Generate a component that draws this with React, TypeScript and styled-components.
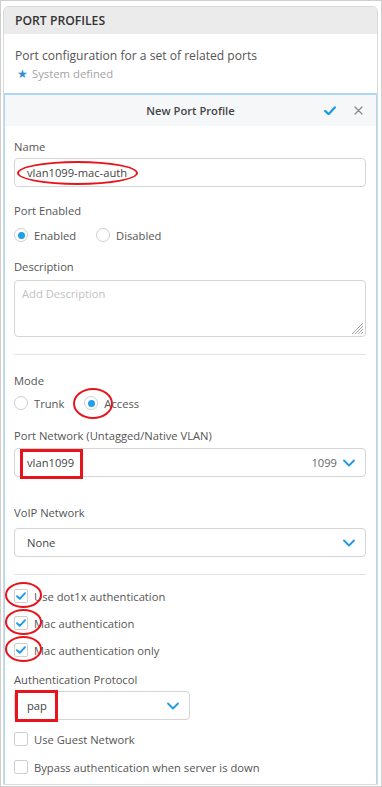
import React from "react";
import styled, { createGlobalStyle, css } from "styled-components";

const GlobalStyle = createGlobalStyle`
  html, body { margin: 0; padding: 0; background: #ffffff; }
  body { font-family: "Open Sans", "Noto Sans", sans-serif; color: #555; }
  * { box-sizing: border-box; }
`;

const Frame = styled.div`
  width: 382px;
  height: 787px;
  border: 1px solid #cfcfcf;
  padding: 5px 3px 1px 2px;
  background: #fff;
`;

const Card = styled.div`
  height: 100%;
  border: 1px solid #dadada;
  border-radius: 5px 5px 0 0;
  display: flex;
  flex-direction: column;
  overflow: hidden;
`;

const CardHeader = styled.div`
  height: 27px;
  background: #ebebeb;
  display: flex;
  align-items: center;
  padding: 0 11px;
  font-size: 12.2px;
  font-weight: 600;
  color: #333;
`;

const Intro = styled.div`
  padding: 13px 11px 11px;
  display: flex;
  flex-direction: column;
  gap: 1px;
`;

const IntroText = styled.div`
  font-size: 12.1px;
  color: #555;
  line-height: 18px;
`;

const SystemNote = styled.div`
  display: flex;
  align-items: center;
  gap: 4px;
  font-size: 11.3px;
  color: #a3a3a3;
  line-height: 16px;
  padding-left: 2px;
`;

const Star = styled.span`
  color: #2d8fd5;
  font-size: 12px;
`;

const Panel = styled.div`
  flex: 1;
  margin: 0 -1px;
  border: 2px solid #a9d7f4;
  border-bottom: none;
  display: flex;
  flex-direction: column;
`;

const PanelHeader = styled.div`
  height: 31px;
  background: #f6f7f9;
  display: grid;
  grid-template-columns: 1fr auto 1fr;
  align-items: center;
`;

const PanelTitle = styled.div`
  font-size: 11.2px;
  font-weight: 600;
  color: #444;
`;

const PanelActions = styled.div`
  display: flex;
  justify-content: flex-end;
  align-items: center;
  gap: 18px;
  padding-right: 13px;
`;

const Form = styled.div`
  padding: 13px 10px 0 9px;
  display: flex;
  flex-direction: column;
  font-size: 11.2px;
`;

const Label = styled.div<{ $mt?: number; $mb?: number }>`
  font-size: 11.2px;
  line-height: 16px;
  color: #555;
  margin-top: ${(p) => p.$mt ?? 0}px;
  margin-bottom: ${(p) => p.$mb ?? 4}px;
`;

const fieldBox = css`
  position: relative;
  border: 1px solid #d4d4d4;
  border-radius: 4px;
  background: #fff;
  font-size: 11.2px;
  color: #444;
`;

const TextInput = styled.div`
  ${fieldBox};
  height: 29px;
  display: flex;
  align-items: center;
  padding: 0 12px;
`;

const TextArea = styled.div`
  ${fieldBox};
  height: 57px;
  padding: 5px 7px;
  color: #c2c2c2;
`;

const Grip = styled.svg`
  position: absolute;
  right: 1px;
  bottom: 1px;
`;

const Select = styled.div<{ $width?: number }>`
  ${fieldBox};
  height: 29px;
  width: ${(p) => (p.$width ? `${p.$width}px` : "auto")};
  display: flex;
  align-items: center;
  padding: 0 10px 0 12px;
  gap: 6px;
`;

const SelectValue = styled.span`
  flex: 1;
`;

const SelectHint = styled.span`
  color: #666;
`;

const Divider = styled.div<{ $mt: number }>`
  height: 1px;
  background: #e3e3e3;
  margin-top: ${(p) => p.$mt}px;
`;

const RadioRow = styled.div`
  display: flex;
  align-items: center;
  height: 18px;
`;

const RadioOption = styled.label<{ $gapRight: number }>`
  position: relative;
  display: flex;
  align-items: center;
  gap: 6px;
  font-size: 11.2px;
  color: #555;
  margin-right: ${(p) => p.$gapRight}px;
`;

const RadioDot = styled.span<{ $on?: boolean }>`
  width: 14px;
  height: 14px;
  border-radius: 50%;
  border: 1px solid #cfcfcf;
  background: #fff;
  display: flex;
  align-items: center;
  justify-content: center;
  &::after {
    content: "";
    width: 7px;
    height: 7px;
    border-radius: 50%;
    background: ${(p) => (p.$on ? "#1ea0ea" : "transparent")};
  }
`;

const CheckList = styled.div<{ $gap: number; $mt: number }>`
  display: flex;
  flex-direction: column;
  gap: ${(p) => p.$gap}px;
  margin-top: ${(p) => p.$mt}px;
`;

const CheckRow = styled.label`
  position: relative;
  display: flex;
  align-items: center;
  gap: 6px;
  height: 18px;
  font-size: 11.2px;
  color: #555;
`;

const CheckBox = styled.span`
  width: 14px;
  height: 14px;
  border: 1px solid #cfcfcf;
  border-radius: 2px;
  background: #fff;
  display: flex;
  align-items: center;
  justify-content: center;
`;

const RedEllipse = styled.span<{ $l: number; $t: number; $w: number; $h: number }>`
  position: absolute;
  left: ${(p) => p.$l}px;
  top: ${(p) => p.$t}px;
  width: ${(p) => p.$w}px;
  height: ${(p) => p.$h}px;
  border: 2.5px solid #e8141b;
  border-radius: 50%;
  pointer-events: none;
`;

const RedBox = styled.span<{ $l: number; $t: number; $w: number; $h: number }>`
  position: absolute;
  left: ${(p) => p.$l}px;
  top: ${(p) => p.$t}px;
  width: ${(p) => p.$w}px;
  height: ${(p) => p.$h}px;
  border: 3px solid #e8141b;
  pointer-events: none;
`;

const Chevron = () => (
  <svg width="12" height="8" viewBox="0 0 12 8">
    <path d="M1 1.5 L6 6.5 L11 1.5" fill="none" stroke="#1e9be6" strokeWidth="1.8" strokeLinecap="round" strokeLinejoin="round" />
  </svg>
);

const Tick = ({ size = 10 }: { size?: number }) => (
  <svg width={size} height={size * 0.8} viewBox="0 0 10 8">
    <path d="M1 4.2 L3.8 6.8 L9 1.2" fill="none" stroke="#1e9be6" strokeWidth="1.9" strokeLinecap="round" strokeLinejoin="round" />
  </svg>
);

const Close = () => (
  <svg width="9" height="9" viewBox="0 0 9 9">
    <path d="M1 1 L8 8 M8 1 L1 8" stroke="#8a8a8a" strokeWidth="1.3" strokeLinecap="round" />
  </svg>
);

type CheckProps = { label: string; checked?: boolean; circled?: boolean };
const Check = ({ label, checked, circled }: CheckProps) => (
  <CheckRow>
    <CheckBox>{checked && <Tick />}</CheckBox>
    {label}
    {circled && <RedEllipse $l={-9} $t={-5} $w={37} $h={26} />}
  </CheckRow>
);

export default function App() {
  return (
    <>
      <GlobalStyle />
      <Frame>
        <Card>
          <CardHeader>PORT PROFILES</CardHeader>
          <Intro>
            <IntroText>Port configuration for a set of related ports</IntroText>
            <SystemNote>
              <Star>★</Star>System defined
            </SystemNote>
          </Intro>
          <Panel>
            <PanelHeader>
              <span />
              <PanelTitle>New Port Profile</PanelTitle>
              <PanelActions>
                <Tick size={12} />
                <Close />
              </PanelActions>
            </PanelHeader>
            <Form>
              <Label $mb={3}>Name</Label>
              <TextInput>
                vlan1099-mac-auth
                <RedEllipse $l={2} $t={2} $w={121} $h={24} />
              </TextInput>

              <Label $mt={16} $mb={7}>Port Enabled</Label>
              <RadioRow>
                <RadioOption $gapRight={20}>
                  <RadioDot $on />
                  Enabled
                </RadioOption>
                <RadioOption $gapRight={0}>
                  <RadioDot />
                  Disabled
                </RadioOption>
              </RadioRow>

              <Label $mt={15} $mb={5}>Description</Label>
              <TextArea>
                Add Description
                <Grip width="12" height="12" viewBox="0 0 12 12">
                  <path d="M11 3 L3 11 M11 6 L6 11 M11 9 L9 11 M11 0 L0 11" stroke="#9a9a9a" strokeWidth="0.9" />
                </Grip>
              </TextArea>

              <Divider $mt={17} />

              <Label $mt={18} $mb={5}>Mode</Label>
              <RadioRow>
                <RadioOption $gapRight={20}>
                  <RadioDot />
                  Trunk
                </RadioOption>
                <RadioOption $gapRight={0}>
                  <RadioDot $on />
                  Access
                  <RedEllipse $l={-11} $t={-8} $w={40} $h={31} />
                </RadioOption>
              </RadioRow>

              <Label $mt={16} $mb={4}>Port Network (Untagged/Native VLAN)</Label>
              <Select>
                <SelectValue>vlan1099</SelectValue>
                <SelectHint>1099</SelectHint>
                <Chevron />
                <RedBox $l={5} $t={0} $w={63} $h={30} />
              </Select>

              <Label $mt={28} $mb={7}>VoIP Network</Label>
              <Select>
                <SelectValue>None</SelectValue>
                <Chevron />
              </Select>

              <Divider $mt={17} />

              <CheckList $gap={9} $mt={12}>
                <Check label="Use dot1x authentication" checked circled />
                <Check label="Mac authentication" checked circled />
                <Check label="Mac authentication only" checked circled />
              </CheckList>

              <Label $mt={13} $mb={3}>Authentication Protocol</Label>
              <Select $width={176}>
                <SelectValue>pap</SelectValue>
                <Chevron />
                <RedBox $l={0} $t={-2} $w={43} $h={32} />
              </Select>

              <CheckList $gap={10} $mt={10}>
                <Check label="Use Guest Network" />
                <Check label="Bypass authentication when server is down" />
              </CheckList>
            </Form>
          </Panel>
        </Card>
      </Frame>
    </>
  );
}
